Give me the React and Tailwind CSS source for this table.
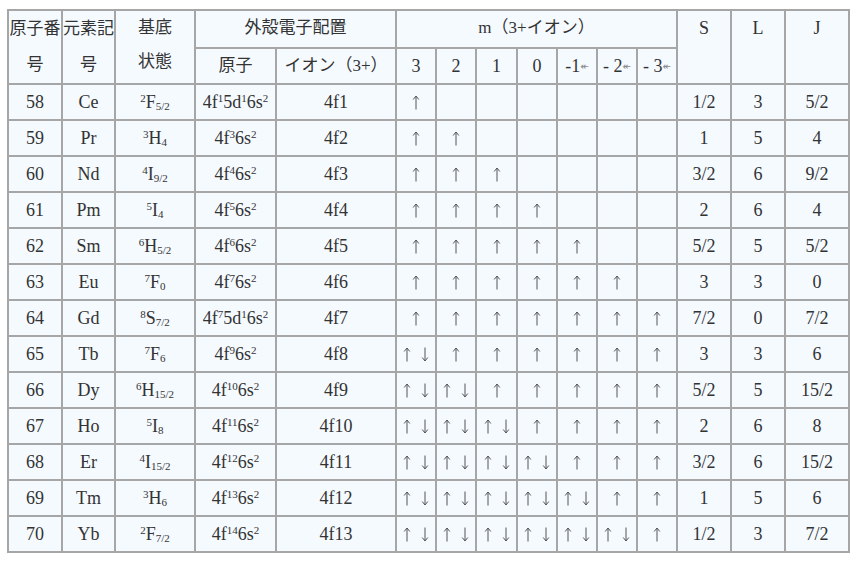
import React from "react";

const F = { fontFamily: '"Liberation Serif", "Noto Sans CJK JP", serif' };

const Sup = ({ children }) => (
  <span className="relative -top-[6px] text-[11px]">{children}</span>
);
const Sub = ({ children }) => (
  <span className="relative top-[2px] text-[11px]">{children}</span>
);

const rows = [
  ["58", "Ce", ["2", "F", "5/2"], [["4f", "1"], ["5d", "1"], ["6s", "2"]], "4f1", 1, "1/2", "3", "5/2"],
  ["59", "Pr", ["3", "H", "4"], [["4f", "3"], ["6s", "2"]], "4f2", 2, "1", "5", "4"],
  ["60", "Nd", ["4", "I", "9/2"], [["4f", "4"], ["6s", "2"]], "4f3", 3, "3/2", "6", "9/2"],
  ["61", "Pm", ["5", "I", "4"], [["4f", "5"], ["6s", "2"]], "4f4", 4, "2", "6", "4"],
  ["62", "Sm", ["6", "H", "5/2"], [["4f", "6"], ["6s", "2"]], "4f5", 5, "5/2", "5", "5/2"],
  ["63", "Eu", ["7", "F", "0"], [["4f", "7"], ["6s", "2"]], "4f6", 6, "3", "3", "0"],
  ["64", "Gd", ["8", "S", "7/2"], [["4f", "7"], ["5d", "1"], ["6s", "2"]], "4f7", 7, "7/2", "0", "7/2"],
  ["65", "Tb", ["7", "F", "6"], [["4f", "9"], ["6s", "2"]], "4f8", 8, "3", "3", "6"],
  ["66", "Dy", ["6", "H", "15/2"], [["4f", "10"], ["6s", "2"]], "4f9", 9, "5/2", "5", "15/2"],
  ["67", "Ho", ["5", "I", "8"], [["4f", "11"], ["6s", "2"]], "4f10", 10, "2", "6", "8"],
  ["68", "Er", ["4", "I", "15/2"], [["4f", "12"], ["6s", "2"]], "4f11", 11, "3/2", "6", "15/2"],
  ["69", "Tm", ["3", "H", "6"], [["4f", "13"], ["6s", "2"]], "4f12", 12, "1", "5", "6"],
  ["70", "Yb", ["2", "F", "7/2"], [["4f", "14"], ["6s", "2"]], "4f13", 13, "1/2", "3", "7/2"],
];

const cell = "bg-[#f5faff] flex items-center justify-center whitespace-nowrap";

const UpArrow = () => (
  <svg width="8" height="15" viewBox="0 0 8 15" fill="none" stroke="#555" strokeWidth="1">
    <path d="M4 1.2 V14.5" />
    <path d="M1.2 4.5 L4 1 L6.8 4.5" />
  </svg>
);
const DownArrow = () => (
  <svg width="8" height="15" viewBox="0 0 8 15" fill="none" stroke="#555" strokeWidth="1">
    <path d="M4 0.5 V13.8" />
    <path d="M1.2 10.5 L4 14 L6.8 10.5" />
  </svg>
);

function Arrow({ n, i }) {
  const up = n > i;
  const down = n > 7 + i;
  if (!up) return <div className={cell}></div>;
  return (
    <div className={cell}>
      <span className="flex gap-[10px] pt-[1px]">
        <UpArrow />
        {down && <DownArrow />}
      </span>
    </div>
  );
}

const Mark = () => (
  <span className="text-[10px] text-[#888]" style={{ fontFamily: '"DejaVu Sans", sans-serif' }}>↞</span>
);

export default function App() {
  return (
    <div className="bg-white w-[859px] h-[561px] pt-[9px] pl-[7px]" style={F}>
      <div className="grid w-fit gap-[2px] p-[2px] bg-[#a6a6a6] text-[#333] text-[18px] grid-cols-[52px_51px_78px_79px_118px_38px_38px_39px_38px_38px_38px_38px_52px_52px_62px] grid-rows-[36px_34px_repeat(13,34px)]">
        <div className="row-span-2 bg-[#f5faff] text-center text-[17px] leading-[36px] whitespace-nowrap">
          原子番<br />号
        </div>
        <div className="row-span-2 bg-[#f5faff] text-center text-[17px] leading-[36px] whitespace-nowrap">
          元素記<br />号
        </div>
        <div className="row-span-2 bg-[#f5faff] text-center text-[17px] leading-[34px] whitespace-nowrap">
          基底<br />状態
        </div>
        <div className={`col-span-2 ${cell} text-[17px] pb-[3px]`}>外殻電子配置</div>
        <div className={`col-span-7 ${cell} text-[17px] pb-[2px]`}>m（3+イオン）</div>
        <div className="row-span-2 bg-[#f5faff] text-center leading-[34px]">S</div>
        <div className="row-span-2 bg-[#f5faff] text-center leading-[34px]">L</div>
        <div className="row-span-2 bg-[#f5faff] text-center leading-[34px]">J</div>

        <div className={`${cell} text-[17px]`}>原子</div>
        <div className={`${cell} text-[17px]`}>イオン（3+）</div>
        <div className={cell}>3</div>
        <div className={cell}>2</div>
        <div className={cell}>1</div>
        <div className={cell}>0</div>
        <div className={cell}>
          -1<Mark />
        </div>
        <div className={cell}>
          -&nbsp;2<Mark />
        </div>
        <div className={cell}>
          -&nbsp;3<Mark />
        </div>

        {rows.map((r) => (
          <React.Fragment key={r[0]}>
            <div className={cell}>{r[0]}</div>
            <div className={cell}>{r[1]}</div>
            <div className={cell}>
              <span>
                <Sup>{r[2][0]}</Sup>
                {r[2][1]}
                <Sub>{r[2][2]}</Sub>
              </span>
            </div>
            <div className={cell}>
              <span>
                {r[3].map(([a, b], k) => (
                  <React.Fragment key={k}>
                    {a}
                    <Sup>{b}</Sup>
                  </React.Fragment>
                ))}
              </span>
            </div>
            <div className={cell}>{r[4]}</div>
            {[0, 1, 2, 3, 4, 5, 6].map((i) => (
              <Arrow key={i} n={r[5]} i={i} />
            ))}
            <div className={cell}>{r[6]}</div>
            <div className={cell}>{r[7]}</div>
            <div className={cell}>{r[8]}</div>
          </React.Fragment>
        ))}
      </div>
    </div>
  );
}
